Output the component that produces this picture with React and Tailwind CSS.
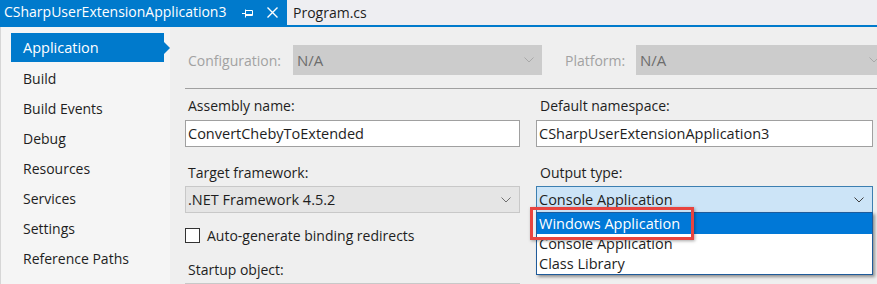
import React from 'react'

const font = { fontFamily: '"Open Sans", "Noto Sans", sans-serif' }

function Chevron({ className = 'text-[#6f6f6f]' }) {
  return (
    <svg width="10" height="6" viewBox="0 0 10 6" className={className}>
      <path d="M0.5 0.5 L5 5 L9.5 0.5" fill="none" stroke="currentColor" strokeWidth="1" />
    </svg>
  )
}

function PinIcon() {
  return (
    <svg width="11" height="9" viewBox="0 0 11 9" className="text-white">
      <path d="M0 4.5 H3.5" stroke="currentColor" strokeWidth="1" />
      <path d="M3.5 0.5 V8.5" stroke="currentColor" strokeWidth="1" />
      <path d="M3.5 1.5 H10.5 V6.5 H3.5" fill="none" stroke="currentColor" strokeWidth="1" />
      <path d="M3.5 5.5 H10.5" stroke="currentColor" strokeWidth="1" />
    </svg>
  )
}

function CloseIcon() {
  return (
    <svg width="11" height="11" viewBox="0 0 11 11" className="text-white">
      <path d="M0.5 0.5 L10.5 10.5 M10.5 0.5 L0.5 10.5" stroke="currentColor" strokeWidth="1.4" />
    </svg>
  )
}

const navItems = [
  'Build',
  'Build Events',
  'Debug',
  'Resources',
  'Services',
  'Settings',
  'Reference Paths',
  'Signing',
]

export default function App() {
  return (
    <div className="w-[877px] h-[284px] overflow-hidden bg-[#efefef] flex flex-col text-[#1e1e1e]" style={font}>
      {/* Tab strip */}
      <div className="h-[27px] flex items-stretch bg-[#eeeef2] border-b-2 border-[#007acc] shrink-0">
        <div className="w-[287px] bg-[#007acc] text-white flex items-center pl-[4px] text-[14px] leading-none">
          <span className="w-[238px] -mt-[1px] whitespace-nowrap">CSharpUserExtensionApplication3</span>
          <span className="mt-[1px]"><PinIcon /></span>
          <span className="ml-[14px]"><CloseIcon /></span>
        </div>
        <div className="pl-[6px] flex items-center text-[14px] text-[#1e1e1e] -mt-[1px]">Program.cs</div>
      </div>

      <div className="flex-1 flex min-h-0">
        {/* Side nav */}
        <div className="w-[170px] shrink-0 bg-[#f5f5f5] border-l border-[#d6d6d6] pt-[6px] text-[14px]">
          <div className="relative ml-[10px] w-[153px] h-[29px] bg-[#007acc] text-white flex items-center pl-[12px] text-[14.5px] pt-[1px]">
            Application
            <span className="absolute right-[-6px] top-[9px] w-0 h-0 border-y-[6px] border-y-transparent border-l-[6px] border-l-[#007acc]" />
          </div>
          <div className="pt-[1px]">
            {navItems.map(item => (
              <div key={item} className="h-[30px] flex items-center pl-[22px] whitespace-nowrap">{item}</div>
            ))}
          </div>
        </div>

        {/* Page */}
        <div className="flex-1 min-w-0 relative pl-[15px] text-[14px]">
          <div className="flex items-center mt-[18px] h-[30px] text-[#a2a2a2]">
            <span className="w-[108px] pl-[3px]">Configuration:</span>
            <div className="w-[249px] h-[30px] bg-[#cccccc] flex items-center justify-between pl-[4px] pr-[8px] text-[#6d6d6d] text-[15px]">
              N/A
              <Chevron className="text-[#a9a9a9]" />
            </div>
            <span className="w-[94px] pl-[23px]">Platform:</span>
            <div className="flex-1 -mr-[10px] h-[30px] bg-[#cccccc] flex items-center justify-between pl-[4px] pr-[8px] text-[#6d6d6d] text-[15px]">
              N/A
              <Chevron className="text-[#a9a9a9]" />
            </div>
          </div>

          <div className="border-t border-[#a0a0a0] mt-[13px]" />

          <div className="grid grid-cols-[335px_337px] gap-x-[16px] mt-[6px]">
            <div>
              <div className="h-[21px] pl-[3px] flex items-center">Assembly name:</div>
              <div className="mt-[4px] h-[27px] bg-white border border-[#a0a0a0] flex items-center pl-[2px] text-[14.5px]">ConvertChebyToExtended</div>
              <div className="mt-[15px] h-[21px] pl-[3px] flex items-center">Target framework:</div>
              <div className="mt-[3px] h-[27px] bg-[#e5e5e5] border border-[#c8c8c8] flex items-center justify-between pl-[2px] pr-[8px] text-[14.5px]">
                .NET Framework 4.5.2
                <Chevron />
              </div>
              <div className="mt-[15px] flex items-center h-[15px]">
                <span className="w-[15px] h-[15px] bg-white border border-[#333333]" />
                <span className="ml-[7px]">Auto-generate binding redirects</span>
              </div>
              <div className="mt-[16px] h-[21px] pl-[3px] flex items-center">Startup object:</div>
              <div className="mt-[3px] h-[27px] bg-[#e5e5e5] border border-[#c8c8c8]" />
            </div>
            <div>
              <div className="h-[21px] pl-[4px] flex items-center">Default namespace:</div>
              <div className="mt-[4px] h-[27px] bg-white border border-[#a0a0a0] flex items-center pl-[2px] text-[14.5px]">CSharpUserExtensionApplication3</div>
              <div className="mt-[15px] h-[21px] pl-[4px] flex items-center">Output type:</div>
              <div className="relative mt-[3px] h-[27px] bg-[#cce4f7] border border-[#3c7fb1] flex items-center justify-between pl-[2px] pr-[8px] text-[14.5px]">
                Console Application
                <Chevron className="text-[#404040]" />
                {/* Open list */}
                <div className="absolute left-[-1px] right-[-1px] top-[25px] bg-white border border-[#1f5b9a] shadow-[2px_2px_3px_rgba(0,0,0,0.4)] z-10">
                  <div className="h-[21px] bg-[#0078d7] text-white flex items-center pl-[2px]">Windows Application</div>
                  <div className="h-[20px] flex items-center pl-[2px]">Console Application</div>
                  <div className="h-[20px] flex items-center pl-[2px]">Class Library</div>
                </div>
                {/* Highlight */}
                <div className="absolute left-[-7px] top-[20px] w-[164px] h-[33px] border-[3px] border-[#e8443f] shadow-[1px_1px_3px_rgba(0,0,0,0.35)] z-20" />
              </div>
            </div>
          </div>
        </div>
      </div>
    </div>
  )
}
